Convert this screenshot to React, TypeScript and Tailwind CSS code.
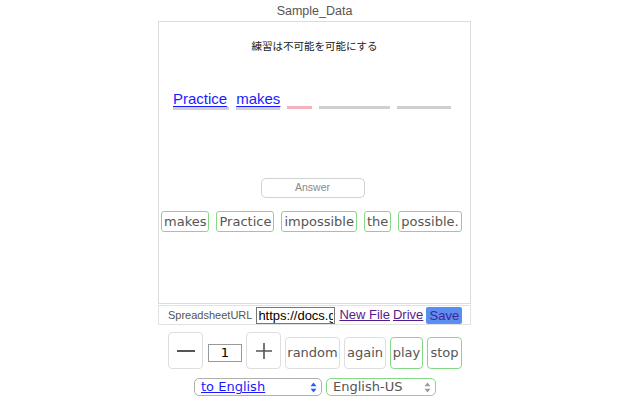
const SANS = "font-['Liberation_Sans',Arial,sans-serif]";
const VERD = "font-['DejaVu_Sans',Verdana,sans-serif]";

const CHIPS = ['makes', 'Practice', 'impossible', 'the', 'possible.'];

function Arrows({ color }: { color: string }) {
  return (
    <svg width="7" height="11" viewBox="0 0 7 11" className="shrink-0">
      <path d="M3.5 0.5 L6.5 4.2 L0.5 4.2 Z" fill={color} />
      <path d="M3.5 10.5 L6.5 6.8 L0.5 6.8 Z" fill={color} />
    </svg>
  );
}

export default function App() {
  return (
    <div className="w-[640px] h-[400px] bg-white overflow-hidden">
      <div className="w-[313px] ml-[158px] flex flex-col">
        {/* Title */}
        <div className={`h-[21px] pt-[4px] text-center text-[12.5px] leading-[15px] text-[#555] ${SANS}`}>
          Sample_Data
        </div>

        {/* Main card */}
        <div className="h-[283px] border border-[#dcdcdc] flex flex-col">
          <p className="mt-[17px] text-center text-[10.5px] leading-[14px] text-[#222] font-['Noto_Sans_CJK_JP',sans-serif]">
            練習は不可能を可能にする
          </p>

          {/* Sentence row */}
          <div className={`mt-[37px] pl-[14px] flex items-end gap-[7px] text-[15px] leading-[17px] ${SANS}`}>
            <span className="text-[#1a1aff] underline underline-offset-[2px] border-b-[3px] border-[#cfcfcf] pr-[2px]">Practice</span>
            <span className="text-[#1a1aff] underline underline-offset-[2px] border-b-[3px] border-[#cfcfcf]">makes</span>
            <span className="w-[25px] h-[3px] bg-[#f4b3bf] mb-[1px]" />
            <span className="w-[71px] h-[3px] bg-[#cfcfcf] mb-[1px]" />
            <span className="w-[54px] h-[3px] bg-[#cfcfcf] mb-[1px]" />
          </div>

          {/* Answer */}
          <div className="mt-[68px] flex justify-center pr-[4px]">
            <button className={`w-[104px] h-[20px] rounded-[5px] border border-[#d2d2d2] text-[10.5px] text-[#8a8a8a] ${SANS}`}>
              Answer
            </button>
          </div>

          {/* Word chips */}
          <div className={`mt-[13px] pl-[2px] flex gap-[7px] ${VERD}`}>
            {CHIPS.map(w => (
              <span
                key={w}
                className="h-[21px] px-[2px] rounded-[3px] border border-[#86d886] text-[13px] leading-[19px] text-[#555]"
              >
                {w}
              </span>
            ))}
          </div>
        </div>

        {/* Spreadsheet URL row */}
        <div className={`mt-[1px] h-[20px] border border-[#e2e2e2] flex items-center pl-[9px] gap-[3px] whitespace-nowrap ${SANS}`}>
          <span className="text-[11px] text-[#555] mr-[1px]">SpreadsheetURL</span>
          <input
            readOnly
            value="https://docs.google.com"
            className="w-[79px] h-[17px] border border-[#777] text-[13px] leading-[15px] text-black px-[1px] outline-none"
          />
          <span className="text-[13px] text-[#551a8b] underline ml-[1px]">New File</span>
          <span className="text-[13px] text-[#551a8b] underline">Drive</span>
          <span className="h-[17px] w-[36px] rounded-[2px] bg-[#5a8ef0] text-[13px] leading-[17px] text-[#4b2295] text-center">
            Save
          </span>
        </div>

        {/* Controls */}
        <div className={`mt-[7px] pl-[10px] flex items-end gap-[4px] text-[13px] text-[#555] ${VERD}`}>
          <button className="w-[35px] h-[37px] rounded-[4px] border border-[#dedede] flex items-center justify-center">
            <span className="w-[18px] h-[2px] bg-[#555]" />
          </button>
          <div className="mb-[7px] ml-[1px] w-[34px] h-[18px] border border-[#999] text-center text-[13px] leading-[16px] text-black">
            1
          </div>
          <button className="w-[35px] h-[37px] rounded-[4px] border border-[#dedede] flex items-center justify-center">
            <svg width="18" height="18" viewBox="0 0 18 18">
              <path d="M9 1 V17 M1 9 H17" stroke="#555" strokeWidth="1.6" />
            </svg>
          </button>
          <button className="w-[55px] h-[32px] rounded-[4px] border border-[#dedede]">random</button>
          <button className="w-[42px] h-[32px] rounded-[4px] border border-[#dedede]">again</button>
          <button className="w-[33px] h-[32px] rounded-[4px] border border-[#86d886]">play</button>
          <button className="w-[35px] h-[32px] rounded-[4px] border border-[#86d886]">stop</button>
        </div>

        {/* Selects */}
        <div className={`mt-[9px] ml-[36px] flex gap-[4px] text-[13px] ${VERD}`}>
          <div className="w-[128px] h-[18px] rounded-[5px] border border-[#b0b0b0] flex items-center justify-between pl-[6px] pr-[4px]">
            <span className="text-[#1a1aff] underline leading-[16px]">to English</span>
            <Arrows color="#2a5cf0" />
          </div>
          <div className="w-[110px] h-[18px] rounded-[5px] border border-[#86d886] flex items-center justify-between pl-[6px] pr-[4px]">
            <span className="text-[#555] leading-[16px]">English-US</span>
            <Arrows color="#9a9a9a" />
          </div>
        </div>
      </div>
    </div>
  );
}
